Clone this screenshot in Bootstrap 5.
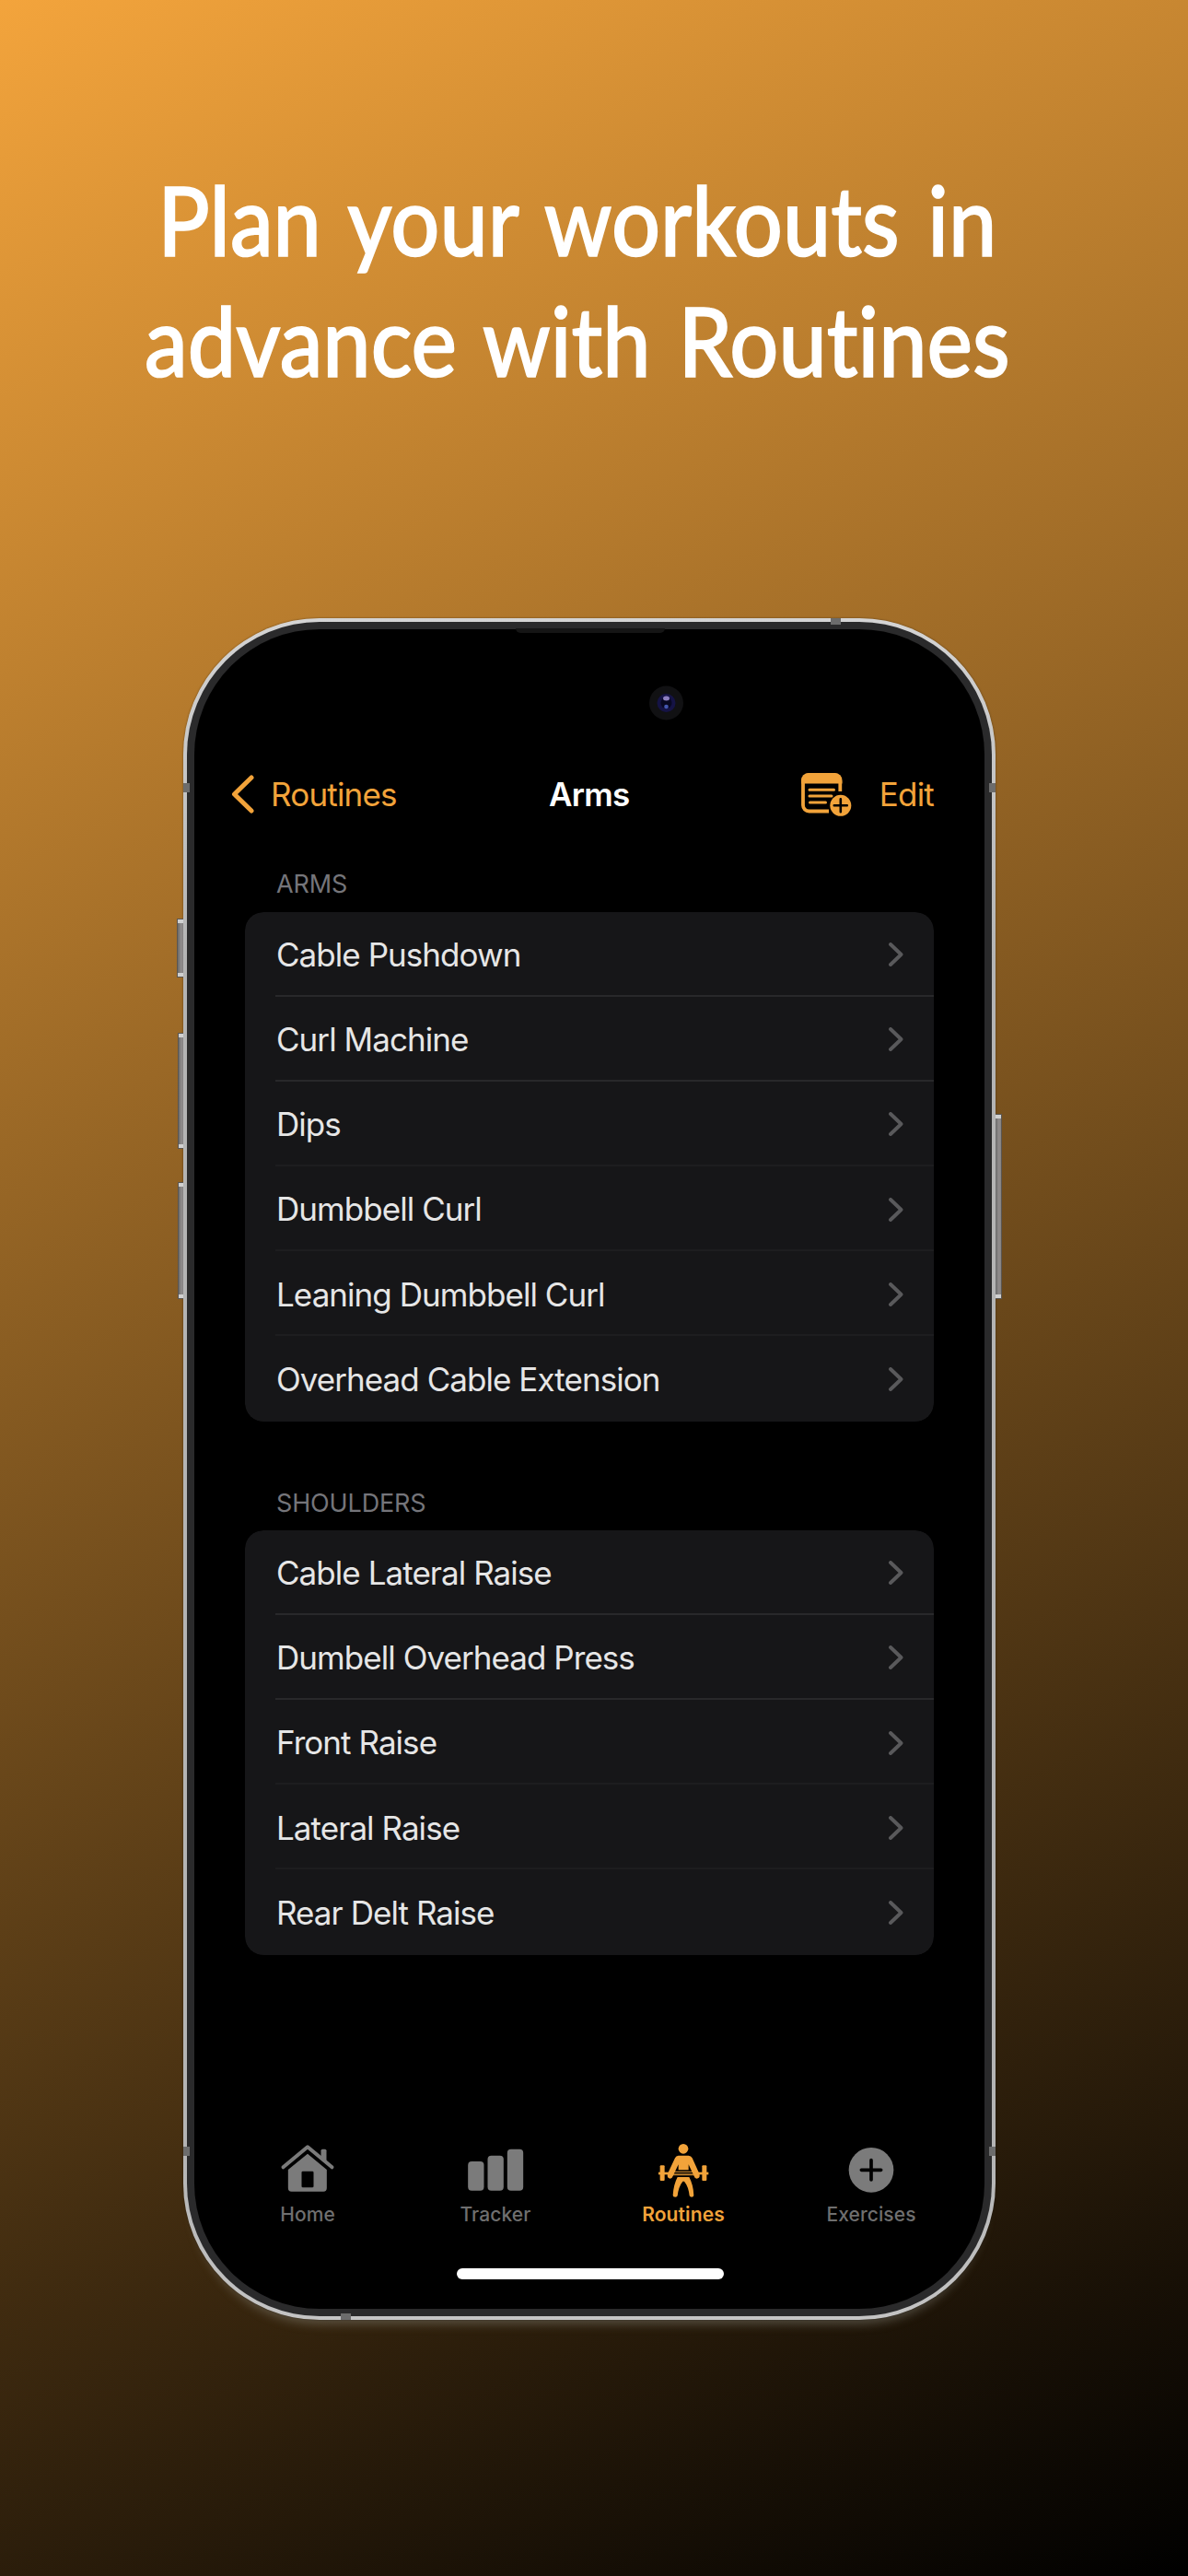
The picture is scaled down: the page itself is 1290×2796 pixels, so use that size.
<!DOCTYPE html>
<html lang="en">
<head>
<meta charset="utf-8">
<meta name="viewport" content="width=device-width, initial-scale=1">
<title>Routines</title>
<link href="https://cdn.jsdelivr.net/npm/bootstrap@5.3.0/dist/css/bootstrap.min.css" rel="stylesheet">
<style>
html,body{margin:0;height:2796px;overflow:hidden}
body{width:1290px;background:linear-gradient(155deg,#f3a43c 0%,#000 100%);font-family:Inter,"Liberation Sans",sans-serif}
.headline{height:671px;padding-top:172px;width:1254px;font-family:Lato,sans-serif;font-weight:500;font-size:105px;line-height:131px;color:#fff;white-space:nowrap;font-variant-ligatures:none}
.headline span{display:inline-block;transform:scaleX(.89);-webkit-text-stroke:1.6px #fff}
.line-one{word-spacing:8px}
.line-two{word-spacing:7px}
.phone{width:882px;height:1847px;margin-left:199px;border-radius:148px;background:linear-gradient(#d4d4d4,#b4b4b4 20%,#b4b4b4 90%,#c4c4c4);padding:4px;box-shadow:0 0 2px rgba(0,0,0,.5),0 14px 12px -10px rgba(150,150,140,.45)}
.bezel{height:1839px;background:#2a2a2b;border-radius:144px;padding:8px}
.display{height:1823px;background:#000;border-radius:136px}
.key{position:absolute;background:linear-gradient(90deg,#6a6a6a,#918d8d 60%,#858282);border:1px solid #5a5550;border-width:1px 0 1px 1px;box-shadow:inset 0 4px #d0d0d0,inset 0 -4px #d0d0d0}
.key-action{left:-7px;top:326px;width:7px;height:64px}
.key-up{left:-6px;top:450px;width:6px;height:126px}
.key-down{left:-6px;top:612px;width:6px;height:127px}
.key-power{left:882px;top:538px;width:7px;height:201px;border-width:1px 1px 1px 0}
.band{position:absolute;background:#6c6c6c}
.band-v{width:7px;height:10px}
.band-h{width:11px;height:7px}
.b1{left:0;top:179px}.b2{right:0;top:179px}.b3{left:0;top:1659px}.b4{right:0;top:1659px}.b5{left:703px;top:0}.b6{left:171px;bottom:0}
.speaker{position:absolute;left:361px;top:11px;width:162px;height:5px;background:#151515;border-radius:0 0 5px 5px}
.camera{position:absolute;left:505px;top:73px}
.topbar{margin-top:133px;height:92px;font-size:35px;letter-spacing:-.8px}
.topbar>.amber{flex:1 1 400px}
.amber{color:#f2a33a}
.back{padding-left:40px;gap:18px}
.actions{padding-right:55px;gap:29px}
.listing{padding:35.5px 0 0 55px}
.grouplabel{font-size:27px;line-height:32px;letter-spacing:-.15px;color:#75757a;padding-left:34px;margin-bottom:14px}
.exercises{--bs-list-group-bg:#161618;--bs-list-group-color:#e6e6e6;width:748px;border-radius:20px;overflow:hidden}
.exercises+.grouplabel{margin-top:73px;margin-bottom:13px}
.exercises .list-group-item{height:92.2px;padding:1px 33px 0 34px;border:0;font-size:35px;letter-spacing:-.95px}
.exercises .list-group-item:not(:last-child){background:linear-gradient(#1d1d1f,#1d1d1f) 33px 100%/715px 2px no-repeat #161618}
.exercises .list-group-item:nth-child(-n+2){background-image:linear-gradient(#28282a,#28282a)!important}
.tabs{width:816px;margin:auto 0 46px 21px}
.tab-label{font-size:21px;font-weight:500;line-height:24px;margin-top:7px;letter-spacing:.1px}
.tabs>div{color:#6f6f6f}
.tabs>.amber{color:#f2a33a}
.tabs>.amber .tab-label{font-weight:600}
.homebar{width:290px;height:12px;border-radius:6px;background:#fff;margin:0 0 32px 285px}
</style>
<script src="https://cdn.jsdelivr.net/npm/bootstrap@5.3.0/dist/js/bootstrap.bundle.min.js"></script>
</head>
<body>
<svg width="0" height="0" class="position-absolute"><symbol id="chev" viewBox="0 0 16 26"><path d="M2 2 13.500 13 2 24" fill="none" stroke="#59595b" stroke-width="3.900" stroke-linecap="round" stroke-linejoin="round"/></symbol></svg>
<h1 class="headline text-center m-0"><span class="line-one">Plan your workouts in</span><br><span class="line-two">advance with Routines</span></h1>
<main class="phone position-relative">
  <i class="key key-action"></i><i class="key key-up"></i><i class="key key-down"></i><i class="key key-power"></i>
  <div class="bezel"><div class="display d-flex flex-column">
    <header class="topbar d-flex align-items-center">
      <div class="back amber d-flex align-items-center">
        <svg width="25" height="42" viewBox="0 0 25 42" fill="none" stroke="currentColor" stroke-width="5" stroke-linecap="round" stroke-linejoin="round"><path d="M22 3 3.5 21 22 39"/></svg>
        <span>Routines</span>
      </div>
      <div class="fw-semibold text-white">Arms</div>
      <div class="actions amber d-flex align-items-center justify-content-end">
        <svg width="58" height="52" viewBox="868 834 58 52">
          <path d="M912.3 857V846a7 7 0 0 0-7-7H879a7 7 0 0 0-7 7v26a6.500 6.500 0 0 0 6.500 6.500H900" fill="none" stroke="currentColor" stroke-width="3.8"/>
          <path d="M870 848.500V845a8 8 0 0 1 8-8h28.500a8 8 0 0 1 8 8v3.500z" fill="currentColor"/>
          <path d="M879 855.200h26.500M879 862h24M879.500 869h17" fill="none" stroke="currentColor" stroke-width="3" stroke-linecap="round"/>
          <circle cx="912.8" cy="872.3" r="11.5" fill="currentColor"/>
          <path d="M912.800 865.300v14M905.800 872.300h14" stroke="#000" stroke-width="2.600" stroke-linecap="round"/>
        </svg>
        <span>Edit</span>
      </div>
    </header>
    <section class="listing">
      <div class="grouplabel">ARMS</div>
      <ul class="list-group exercises">
        <li class="list-group-item d-flex align-items-center justify-content-between">Cable Pushdown<svg width="16" height="26"><use href="#chev"/></svg></li>
        <li class="list-group-item d-flex align-items-center justify-content-between">Curl Machine<svg width="16" height="26"><use href="#chev"/></svg></li>
        <li class="list-group-item d-flex align-items-center justify-content-between">Dips<svg width="16" height="26"><use href="#chev"/></svg></li>
        <li class="list-group-item d-flex align-items-center justify-content-between">Dumbbell Curl<svg width="16" height="26"><use href="#chev"/></svg></li>
        <li class="list-group-item d-flex align-items-center justify-content-between">Leaning Dumbbell Curl<svg width="16" height="26"><use href="#chev"/></svg></li>
        <li class="list-group-item d-flex align-items-center justify-content-between">Overhead Cable Extension<svg width="16" height="26"><use href="#chev"/></svg></li>
      </ul>
      <div class="grouplabel">SHOULDERS</div>
      <ul class="list-group exercises">
        <li class="list-group-item d-flex align-items-center justify-content-between">Cable Lateral Raise<svg width="16" height="26"><use href="#chev"/></svg></li>
        <li class="list-group-item d-flex align-items-center justify-content-between">Dumbell Overhead Press<svg width="16" height="26"><use href="#chev"/></svg></li>
        <li class="list-group-item d-flex align-items-center justify-content-between">Front Raise<svg width="16" height="26"><use href="#chev"/></svg></li>
        <li class="list-group-item d-flex align-items-center justify-content-between">Lateral Raise<svg width="16" height="26"><use href="#chev"/></svg></li>
        <li class="list-group-item d-flex align-items-center justify-content-between">Rear Delt Raise<svg width="16" height="26"><use href="#chev"/></svg></li>
      </ul>
    </section>
    <nav class="tabs d-flex text-center">
      <div class="col d-flex flex-column align-items-center">
        <svg width="60" height="60" viewBox="71.500 45 180 180" fill="#7b7b7b">
          <path d="M82 127 161.500 61 241 127" fill="none" stroke="#7b7b7b" stroke-width="12" stroke-linecap="round" stroke-linejoin="round"/>
          <path d="M205 73q0-5 5-5h8q5 0 5 5v37l-18-15z"/>
          <path fill-rule="evenodd" d="M161.500 83 224 135v60q0 11-11 11H109q-11 0-11-11v-60zM146 140q-4 0-4 4v45q0 4 4 4h31q4 0 4-4v-45q0-4-4-4z"/>
        </svg>
        <div class="tab-label">Home</div>
      </div>
      <div class="col d-flex flex-column align-items-center">
        <svg width="62" height="60" viewBox="680.500 45 186 180" fill="#7b7b7b"><rect x="684" y="108" width="52" height="95" rx="12"/><rect x="748" y="89" width="52" height="114" rx="12"/><rect x="812" y="68" width="52" height="135" rx="12"/></svg>
        <div class="tab-label">Tracker</div>
      </div>
      <div class="amber col d-flex flex-column align-items-center">
        <svg width="60" height="60" viewBox="98 45 180 180" fill="currentColor">
          <circle cx="188" cy="67" r="16"/>
          <path d="M172 89h33q8 0 12 8l23 51q5 14-8 16-7 0-9-8l-18-38v18h-33v-18l-18 38q-3 8-9 8-12-2-8-16l24-51q3-8 11-8z"/>
          <path d="M152 140h73v4h-73zM152 148h73v6h-73z" opacity=".75"/>
          <rect x="107" y="143" width="38" height="8"/><rect x="232" y="143" width="38" height="8"/>
          <rect x="112" y="121" width="15" height="50" rx="3"/><rect x="249" y="121" width="15" height="50" rx="3"/>
          <path d="M169 159h38q14 26 15 60-1 5-7 5-5 0-7-4-3-30-17-47h-5q-14 18-17 47-1 4-7 4-8 0-8-6 2-34 15-59z"/>
        </svg>
        <div class="tab-label">Routines</div>
      </div>
      <div class="col d-flex flex-column align-items-center">
        <svg width="60" height="60" viewBox="706 45 180 180"><circle cx="796" cy="136" r="73" fill="#7b7b7b"/><path d="M796 104v64M764 136h64" stroke="#000" stroke-width="11" stroke-linecap="round"/></svg>
        <div class="tab-label">Exercises</div>
      </div>
    </nav>
    <div class="homebar"></div>
  </div></div>
  <i class="band band-v b1"></i><i class="band band-v b2"></i><i class="band band-v b3"></i><i class="band band-v b4"></i><i class="band band-h b5"></i><i class="band band-h b6"></i>
  <div class="speaker"></div>
  <svg class="camera" width="38" height="38" viewBox="0 0 38 38"><circle cx="19.500" cy="19" r="18.500" fill="#111113"/><circle cx="19.500" cy="19" r="10" fill="#151345"/><circle cx="19.500" cy="19" r="6" fill="#080822"/><ellipse cx="19.500" cy="14" rx="3.500" ry="2.500" fill="#8d7fc0"/><circle cx="19.500" cy="23" r="2.300" fill="#4457b0"/></svg>
</main>
</body>
</html>
